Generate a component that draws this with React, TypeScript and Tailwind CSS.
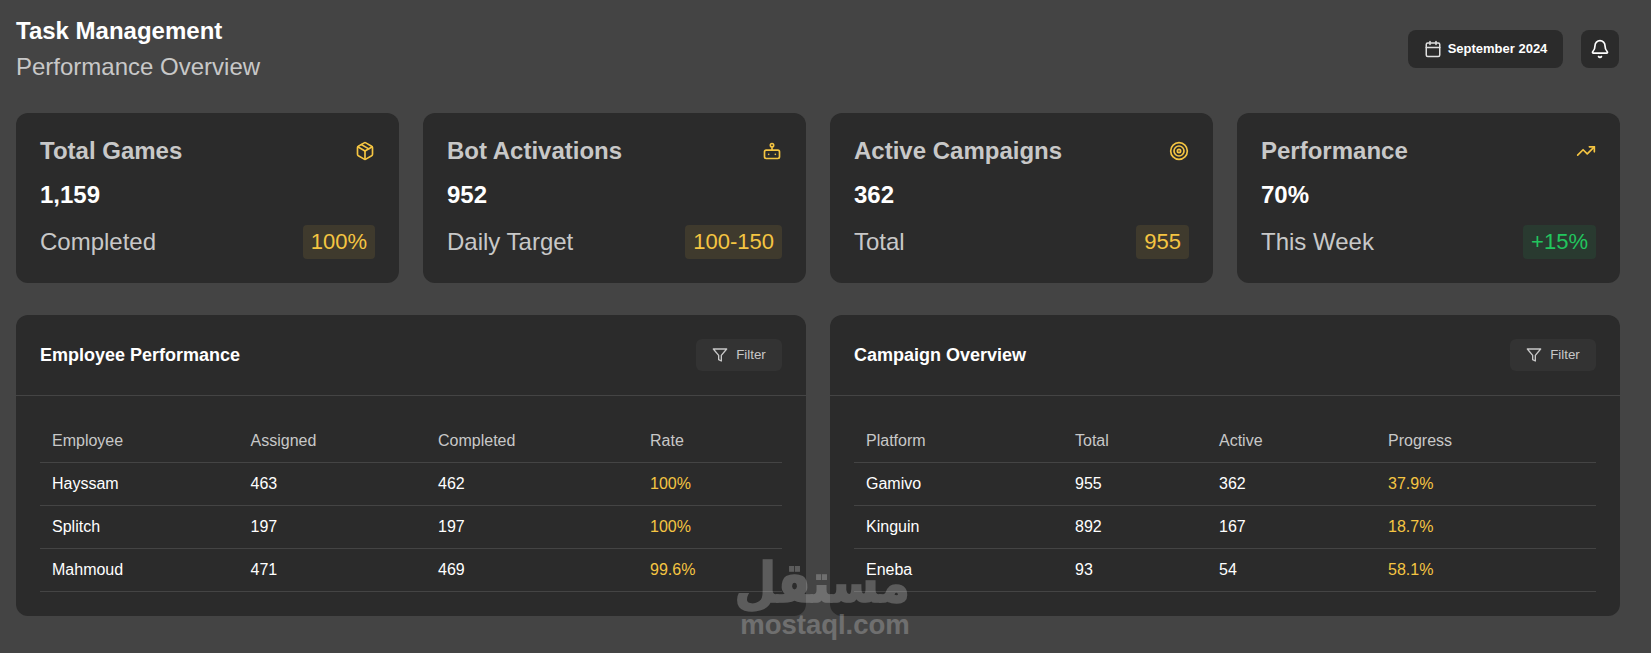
import React from 'react';
import { Package, Target, TrendingUp, Calendar, Bell } from 'lucide-react';

const BotIcon: React.FC<{ className?: string }> = ({ className }) => (
  <svg viewBox="0 0 24 24" fill="none" stroke="currentColor" strokeWidth="2" strokeLinecap="round" strokeLinejoin="round" className={className}>
    <circle cx="12" cy="5" r="2" />
    <path d="M12 7v4" />
    <rect x="3" y="11" width="18" height="10" rx="2" />
    <path d="M8 16h.01" />
    <path d="M16 16h.01" />
  </svg>
);

const FilterIcon: React.FC<{ className?: string }> = ({ className }) => (
  <svg viewBox="0 0 24 24" fill="none" stroke="currentColor" strokeWidth="2" strokeLinecap="round" strokeLinejoin="round" className={className}>
    <polygon points="22 3 2 3 10 12.46 10 19 14 21 14 12.46 22 3" />
  </svg>
);

const stats = [
  { title: 'Total Games', value: '1,159', label: 'Completed', badge: '100%', icon: Package, green: false },
  { title: 'Bot Activations', value: '952', label: 'Daily Target', badge: '100-150', icon: BotIcon, green: false },
  { title: 'Active Campaigns', value: '362', label: 'Total', badge: '955', icon: Target, green: false },
  { title: 'Performance', value: '70%', label: 'This Week', badge: '+15%', icon: TrendingUp, green: true },
];

const employees = {
  title: 'Employee Performance',
  columns: ['Employee', 'Assigned', 'Completed', 'Rate'],
  widths: ['w-[198.5px]', 'w-[187.5px]', 'w-[212px]', ''],
  rows: [
    ['Hayssam', '463', '462', '100%'],
    ['Splitch', '197', '197', '100%'],
    ['Mahmoud', '471', '469', '99.6%'],
  ],
};

const campaigns = {
  title: 'Campaign Overview',
  columns: ['Platform', 'Total', 'Active', 'Progress'],
  widths: ['w-[209px]', 'w-[144px]', 'w-[169px]', ''],
  rows: [
    ['Gamivo', '955', '362', '37.9%'],
    ['Kinguin', '892', '167', '18.7%'],
    ['Eneba', '93', '54', '58.1%'],
  ],
};

const TableCard: React.FC<{ data: typeof employees }> = ({ data }) => (
  <div className="bg-[#2b2b2b] rounded-xl">
    <div className="flex items-center justify-between p-6 border-b border-[#444444]">
      <h2 className="text-[18px] leading-[21px] font-bold text-white">{data.title}</h2>
      <button className="flex items-center justify-center gap-2 w-[86px] h-8 rounded-md bg-[#333333] text-[13.33px] text-[#c8c8c8]">
        <FilterIcon className="w-4 h-4" />
        Filter
      </button>
    </div>
    <div className="p-6">
      <table className="w-full table-fixed border-collapse text-left text-base">
        <thead>
          <tr className="border-b border-[#444444]">
            {data.columns.map((col, i) => (
              <th key={col} className={`px-3 py-3 leading-[18px] font-normal text-[#c8c8c8] ${data.widths[i]}`}>
                {col}
              </th>
            ))}
          </tr>
        </thead>
        <tbody>
          {data.rows.map((row) => (
            <tr key={row[0]} className="border-b border-[#444444]">
              {row.map((cell, i) => (
                <td key={i} className={`px-3 py-3 leading-[18px] ${i === 3 ? 'text-[#f5c542]' : 'text-white'}`}>
                  {cell}
                </td>
              ))}
            </tr>
          ))}
        </tbody>
      </table>
    </div>
  </div>
);

const App: React.FC = () => {
  return (
    <div className="relative h-[653px] overflow-hidden bg-[#444444] pl-4 pr-[31px] pt-[17px] font-['Liberation_Sans',Arial,sans-serif]">
      <div className="flex items-center justify-between mb-8">
        <div>
          <h1 className="text-2xl leading-7 font-bold text-white">Task Management</h1>
          <p className="mt-2 text-2xl leading-7 text-[#c8c8c8]">Performance Overview</p>
        </div>
        <div className="flex items-center gap-[18px] mr-px">
          <button className="flex items-center justify-center gap-1.5 w-[155px] h-[38px] rounded-lg bg-[#2b2b2b] text-[13px] font-bold text-white">
            <Calendar className="w-[18px] h-[18px] text-[#e0e0e0]" />
            September 2024
          </button>
          <button className="flex items-center justify-center w-[38px] h-[38px] rounded-lg bg-[#2b2b2b] text-white">
            <Bell className="w-5 h-5" />
          </button>
        </div>
      </div>

      <div className="grid grid-cols-4 gap-6 mb-8">
        {stats.map((s) => (
          <div key={s.title} className="bg-[#2b2b2b] rounded-xl p-6">
            <div className="flex items-center justify-between">
              <h3 className="text-2xl leading-7 font-bold text-[#c8c8c8]">{s.title}</h3>
              <s.icon className="w-5 h-5 text-[#f5c542]" />
            </div>
            <div className="mt-4 text-2xl leading-7 font-bold text-white">{s.value}</div>
            <div className="flex items-center justify-between mt-4">
              <span className="text-2xl text-[#c8c8c8]">{s.label}</span>
              <span
                className={`px-2 h-[34px] leading-[34px] rounded text-[22px] ${
                  s.green ? 'bg-[#22c55e]/10 text-[#22c55e]' : 'bg-[#f5c542]/10 text-[#f5c542]'
                }`}
              >
                {s.badge}
              </span>
            </div>
          </div>
        ))}
      </div>

      <div className="grid grid-cols-2 gap-6">
        <TableCard data={employees} />
        <TableCard data={campaigns} />
      </div>

      <div className="absolute left-[740px] top-[556px] w-[170px] text-center text-white opacity-[.23] pointer-events-none font-['DejaVu_Sans',sans-serif] font-bold">
        <div dir="rtl" className="text-[48px] leading-[55px] scale-y-[1.15] [-webkit-text-stroke:1.5px_white]">مستقل</div>
        <div className="text-[27.5px] leading-[28px] font-['Liberation_Sans',sans-serif]">mostaql.com</div>
      </div>
    </div>
  );
};

export default App;
